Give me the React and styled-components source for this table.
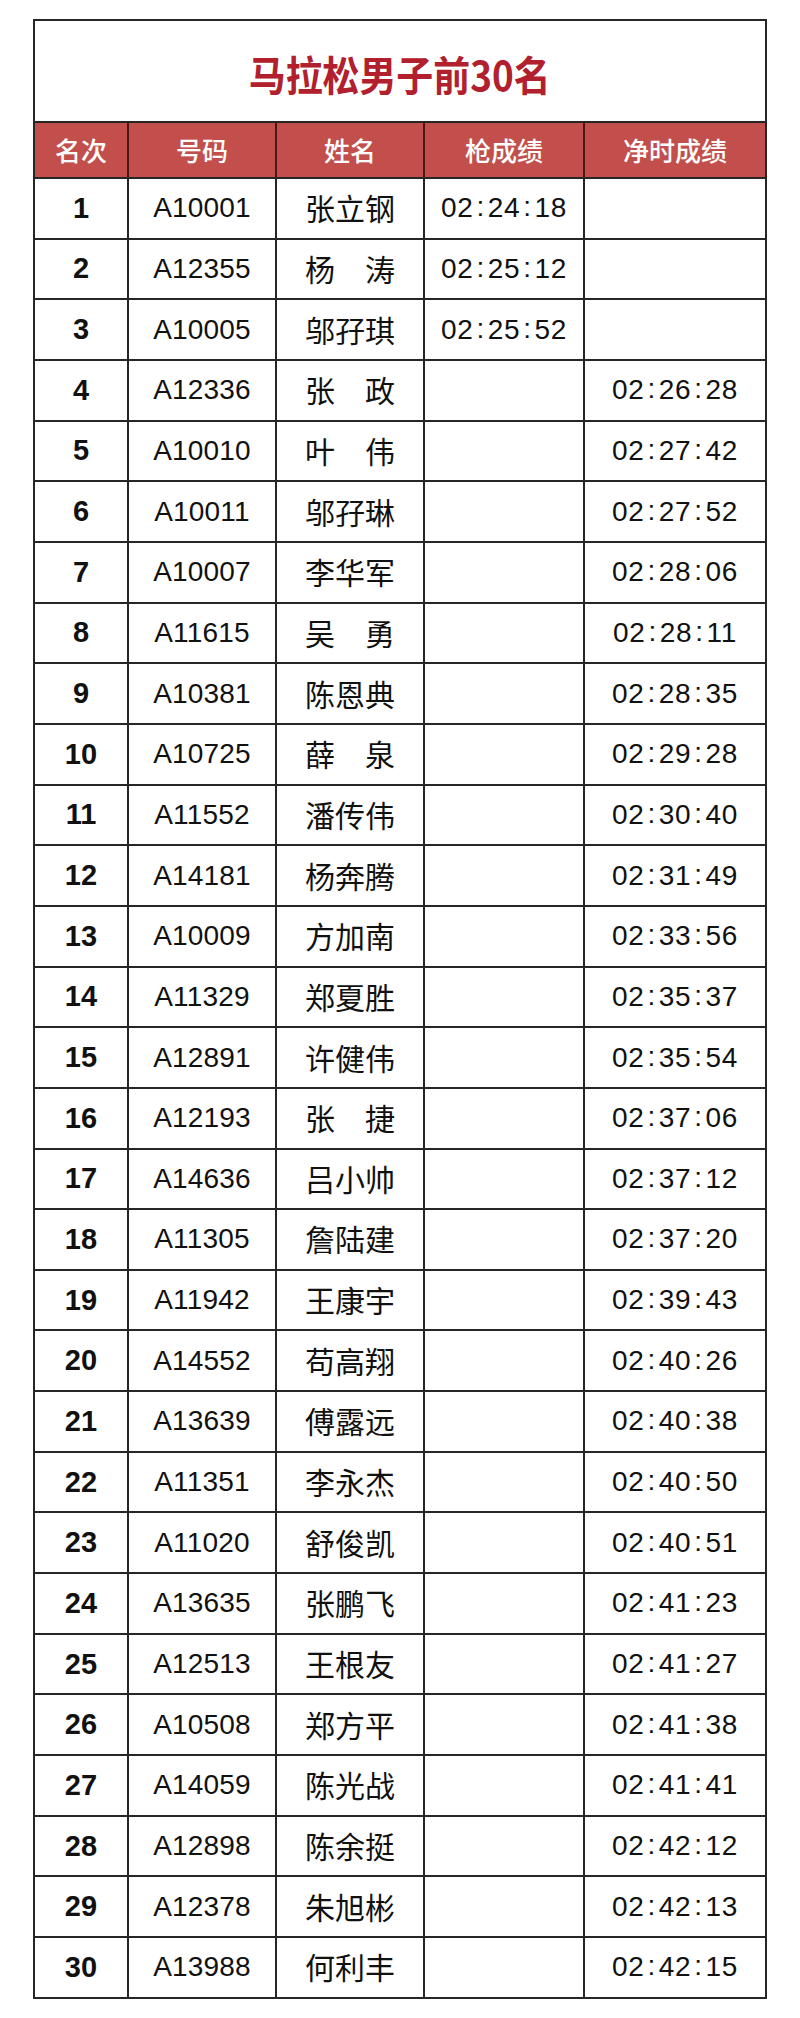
import React from "react";
import styled, { createGlobalStyle } from "styled-components";

const Global = createGlobalStyle`
  html, body { margin: 0; padding: 0; background: #ffffff; }
  body { font-family: "Liberation Sans", "Noto Sans CJK SC", sans-serif; }
`;

const Page = styled.div`
  padding: 19px 33px 18px 33px;
  width: 800px;
  box-sizing: border-box;
`;

const Sheet = styled.div`
  width: 734px;
  border: 2px solid #262626;
  box-sizing: border-box;
  background: #fff;
`;

const Title = styled.h1`
  margin: 0;
  height: 102px;
  box-sizing: border-box;
  border-bottom: 2px solid #262626;
  display: flex;
  align-items: center;
  justify-content: center;
  padding-top: 4px;
  font-family: "Noto Sans CJK SC", sans-serif;
  font-weight: 700;
  font-size: 41px;
  color: #b1202c;
`;

const TitleText = styled.span`
  display: inline-block;
  transform: scaleX(0.9);
`;

const COLS = "94px 148px 148px 160px 180px";

const Row = styled.div`
  display: grid;
  grid-template-columns: ${COLS};
  height: ${(p) => p.$h}px;
  box-sizing: border-box;
  border-bottom: ${(p) => (p.$last ? "none" : "2px solid #262626")};
  background: ${(p) => (p.$head ? "#c24f4c" : "#fff")};
`;

const Cell = styled.div`
  display: flex;
  align-items: center;
  justify-content: center;
  box-sizing: border-box;
  border-right: ${(p) => (p.$end ? "none" : "2px solid #262626")};
  color: #111;
  white-space: pre;
`;

const HeadCell = styled(Cell)`
  color: #ffffff;
  font-family: "Noto Sans CJK SC", sans-serif;
  font-weight: 500;
  font-size: 26px;
  padding-bottom: 1px;
  border-right-color: #4a1816;
`;

const Rank = styled(Cell)`
  font-family: "Liberation Sans", sans-serif;
  font-weight: 700;
  font-size: 29px;
`;

const Code = styled(Cell)`
  font-family: "Liberation Sans", sans-serif;
  font-size: 28px;
  letter-spacing: 0.2px;
`;

const Name = styled(Cell)`
  font-family: "Noto Sans CJK SC", sans-serif;
  font-size: 30px;
  padding-bottom: 2px;
`;

const Time = styled(Cell)`
  font-family: "Liberation Sans", sans-serif;
  font-size: 28px;
  letter-spacing: 0.6px;
`;

const Colon = styled.span`
  margin: 0 3px 0 3px;
  position: relative;
  top: -1px;
`;

const data = [
  ["A10001", "张立钢", "02:24:18", ""],
  ["A12355", "杨　涛", "02:25:12", ""],
  ["A10005", "邬孖琪", "02:25:52", ""],
  ["A12336", "张　政", "", "02:26:28"],
  ["A10010", "叶　伟", "", "02:27:42"],
  ["A10011", "邬孖琳", "", "02:27:52"],
  ["A10007", "李华军", "", "02:28:06"],
  ["A11615", "吴　勇", "", "02:28:11"],
  ["A10381", "陈恩典", "", "02:28:35"],
  ["A10725", "薛　泉", "", "02:29:28"],
  ["A11552", "潘传伟", "", "02:30:40"],
  ["A14181", "杨奔腾", "", "02:31:49"],
  ["A10009", "方加南", "", "02:33:56"],
  ["A11329", "郑夏胜", "", "02:35:37"],
  ["A12891", "许健伟", "", "02:35:54"],
  ["A12193", "张　捷", "", "02:37:06"],
  ["A14636", "吕小帅", "", "02:37:12"],
  ["A11305", "詹陆建", "", "02:37:20"],
  ["A11942", "王康宇", "", "02:39:43"],
  ["A14552", "苟高翔", "", "02:40:26"],
  ["A13639", "傅露远", "", "02:40:38"],
  ["A11351", "李永杰", "", "02:40:50"],
  ["A11020", "舒俊凯", "", "02:40:51"],
  ["A13635", "张鹏飞", "", "02:41:23"],
  ["A12513", "王根友", "", "02:41:27"],
  ["A10508", "郑方平", "", "02:41:38"],
  ["A14059", "陈光战", "", "02:41:41"],
  ["A12898", "陈余挺", "", "02:42:12"],
  ["A12378", "朱旭彬", "", "02:42:13"],
  ["A13988", "何利丰", "", "02:42:15"],
];

function TimeText({ value }) {
  if (!value) return null;
  const parts = value.split(":");
  return (
    <>
      {parts.map((p, i) => (
        <React.Fragment key={i}>
          {i > 0 && <Colon>:</Colon>}
          {p}
        </React.Fragment>
      ))}
    </>
  );
}

export default function App() {
  return (
    <Page>
      <Global />
      <Sheet>
        <Title>
          <TitleText>马拉松男子前30名</TitleText>
        </Title>
        <Row $head $h={56}>
          <HeadCell>名次</HeadCell>
          <HeadCell>号码</HeadCell>
          <HeadCell>姓名</HeadCell>
          <HeadCell>枪成绩</HeadCell>
          <HeadCell $end>净时成绩</HeadCell>
        </Row>
        {data.map((r, i) => (
          <Row key={i} $h={i === 29 ? 58.67 : 60.67} $last={i === 29}>
            <Rank>{i + 1}</Rank>
            <Code>{r[0]}</Code>
            <Name>{r[1]}</Name>
            <Time>
              <TimeText value={r[2]} />
            </Time>
            <Time $end>
              <TimeText value={r[3]} />
            </Time>
          </Row>
        ))}
      </Sheet>
    </Page>
  );
}
